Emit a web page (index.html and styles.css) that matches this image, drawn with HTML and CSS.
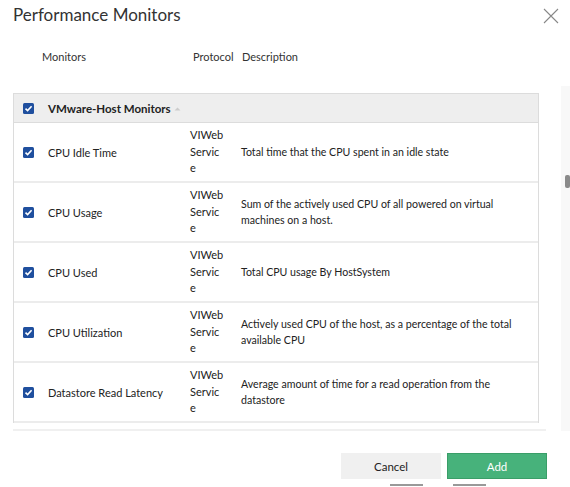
FILE: index.html
```html
<!DOCTYPE html>
<html>
<head>
<meta charset="utf-8">
<link rel="stylesheet" href="styles.css">
</head>
<body>
<div class="dialog">
  <div class="titlebar">
    <h1 class="title">Performance Monitors</h1>
    <svg class="close" width="16" height="16" viewBox="0 0 16 16"><path d="M1 1L15 15M15 1L1 15" stroke="#888" stroke-width="1.1" fill="none"/></svg>
  </div>
  <div class="colheads">
    <span class="ch-mon">Monitors</span>
    <span class="ch-proto">Protocol</span>
    <span class="ch-desc">Description</span>
  </div>
  <div class="table">
    <div class="group">
      <span class="cb"><svg width="11" height="11" viewBox="0 0 11 11"><rect x="0" y="0" width="11" height="11" rx="1.5" fill="#1f4f9e"/><path d="M2.5 5.6L4.6 7.6L8.6 3.3" stroke="#fff" stroke-width="1.6" fill="none"/></svg></span>
      <span class="gname">VMware-Host Monitors</span>
      <svg class="sort" width="7" height="6" viewBox="0 0 7 6"><path d="M0.5 4.5L3.5 1.5L6.5 4.5Z" fill="#ccc"/></svg>
    </div>
    <div class="row">
      <span class="cb"><svg width="11" height="11" viewBox="0 0 11 11"><rect x="0" y="0" width="11" height="11" rx="1.5" fill="#1f4f9e"/><path d="M2.5 5.6L4.6 7.6L8.6 3.3" stroke="#fff" stroke-width="1.6" fill="none"/></svg></span>
      <span class="name">CPU Idle Time</span>
      <span class="proto">VIWeb Service</span>
      <span class="desc">Total time that the CPU spent in an idle state</span>
    </div>
    <div class="row">
      <span class="cb"><svg width="11" height="11" viewBox="0 0 11 11"><rect x="0" y="0" width="11" height="11" rx="1.5" fill="#1f4f9e"/><path d="M2.5 5.6L4.6 7.6L8.6 3.3" stroke="#fff" stroke-width="1.6" fill="none"/></svg></span>
      <span class="name">CPU Usage</span>
      <span class="proto">VIWeb Service</span>
      <span class="desc">Sum of the actively used CPU of all powered on virtual machines on a host.</span>
    </div>
    <div class="row">
      <span class="cb"><svg width="11" height="11" viewBox="0 0 11 11"><rect x="0" y="0" width="11" height="11" rx="1.5" fill="#1f4f9e"/><path d="M2.5 5.6L4.6 7.6L8.6 3.3" stroke="#fff" stroke-width="1.6" fill="none"/></svg></span>
      <span class="name">CPU Used</span>
      <span class="proto">VIWeb Service</span>
      <span class="desc">Total CPU usage By HostSystem</span>
    </div>
    <div class="row">
      <span class="cb"><svg width="11" height="11" viewBox="0 0 11 11"><rect x="0" y="0" width="11" height="11" rx="1.5" fill="#1f4f9e"/><path d="M2.5 5.6L4.6 7.6L8.6 3.3" stroke="#fff" stroke-width="1.6" fill="none"/></svg></span>
      <span class="name">CPU Utilization</span>
      <span class="proto">VIWeb Service</span>
      <span class="desc">Actively used CPU of the host, as a percentage of the total available CPU</span>
    </div>
    <div class="row">
      <span class="cb"><svg width="11" height="11" viewBox="0 0 11 11"><rect x="0" y="0" width="11" height="11" rx="1.5" fill="#1f4f9e"/><path d="M2.5 5.6L4.6 7.6L8.6 3.3" stroke="#fff" stroke-width="1.6" fill="none"/></svg></span>
      <span class="name">Datastore Read Latency</span>
      <span class="proto">VIWeb Service</span>
      <span class="desc">Average amount of time for a read operation from the datastore</span>
    </div>
  </div>
  <div class="sep"></div>
  <div class="footer">
    <button class="btn cancel">Cancel</button>
    <button class="btn add">Add</button>
  </div>
  <div class="stubs">
    <span class="stub s1"></span>
    <span class="stub s2"></span>
  </div>
  <div class="scrolltrack"><div class="thumb"></div></div>
</div>
</body>
</html>
```

FILE: styles.css
```css
* { box-sizing: border-box; }
html, body { margin: 0; padding: 0; background: #fff; }
body {
  font-family: Lato, "Open Sans", "Liberation Sans", sans-serif;
  color: #222;
  font-size: 11px;
  width: 570px;
  height: 487px;
  overflow: hidden;
}
.dialog { position: relative; width: 570px; height: 487px; }
.titlebar {
  display: flex;
  justify-content: space-between;
  align-items: flex-start;
  padding: 3px 11px 0 13px;
  height: 44px;
}
.title {
  margin: 0;
  font-size: 17px;
  font-weight: 400;
  line-height: 24px;
  color: #333;
}
.close { margin-top: 5px; }
.colheads {
  display: flex;
  height: 24px;
  align-items: center;
  color: #333;
}
.ch-mon { margin-left: 42px; width: 151px; }
.ch-proto { width: 49px; }
.table {
  margin-top: 25px;
  margin-left: 13px;
  width: 526px;
  height: 330px;
  overflow: hidden;
  border: 1px solid #dcdcdc;
  border-bottom: none;
}
.group {
  display: flex;
  align-items: center;
  height: 29px;
  background: #eeeeee;
  border-bottom: 1px solid #dcdcdc;
}
.cb { width: 34px; padding-left: 9px; display: flex; align-items: center; }
.cb svg { display: block; }
.gname { font-weight: 700; font-size: 11.5px; color: #222; }
.sort { margin-left: 3px; margin-top: 1px; }
.row {
  display: flex;
  align-items: center;
  height: 60px;
  border-bottom: 2px solid #ececec;
}
.name { width: 142px; }
.proto { width: 51px; line-height: 16.5px; padding-right: 17px; overflow-wrap: anywhere; }
.desc { width: 290px; line-height: 16.5px; font-size: 10.6px; }
.sep {
  margin-top: 6px;
  margin-left: 13px;
  width: 533px;
  height: 2px;
  background: #f0f0f0;
}
.footer {
  display: flex;
  justify-content: flex-end;
  gap: 6px;
  padding-right: 23px;
  margin-top: 22px;
}
.btn {
  font-family: inherit;
  font-size: 11.5px;
  width: 100px;
  height: 26px;
  border: 1px solid transparent;
  padding: 0;
}
.cancel { background: #f0f0f0; color: #222; border-color: #f0f0f0; }
.add { background: #47b27b; color: #fff; border-color: #3a9e68; }
.stubs { display: flex; padding-left: 390px; gap: 30px; margin-top: 5px; }
.stub { width: 33px; height: 2px; background: #999; }
.scrolltrack {
  position: absolute;
  right: 0;
  top: 86px;
  width: 9px;
  height: 345px;
  background: #f8f8f8;
}
.thumb {
  position: absolute;
  left: 4px;
  top: 89px;
  width: 5px;
  height: 13px;
  border-radius: 2px;
  background: #8a8a8a;
}
```
